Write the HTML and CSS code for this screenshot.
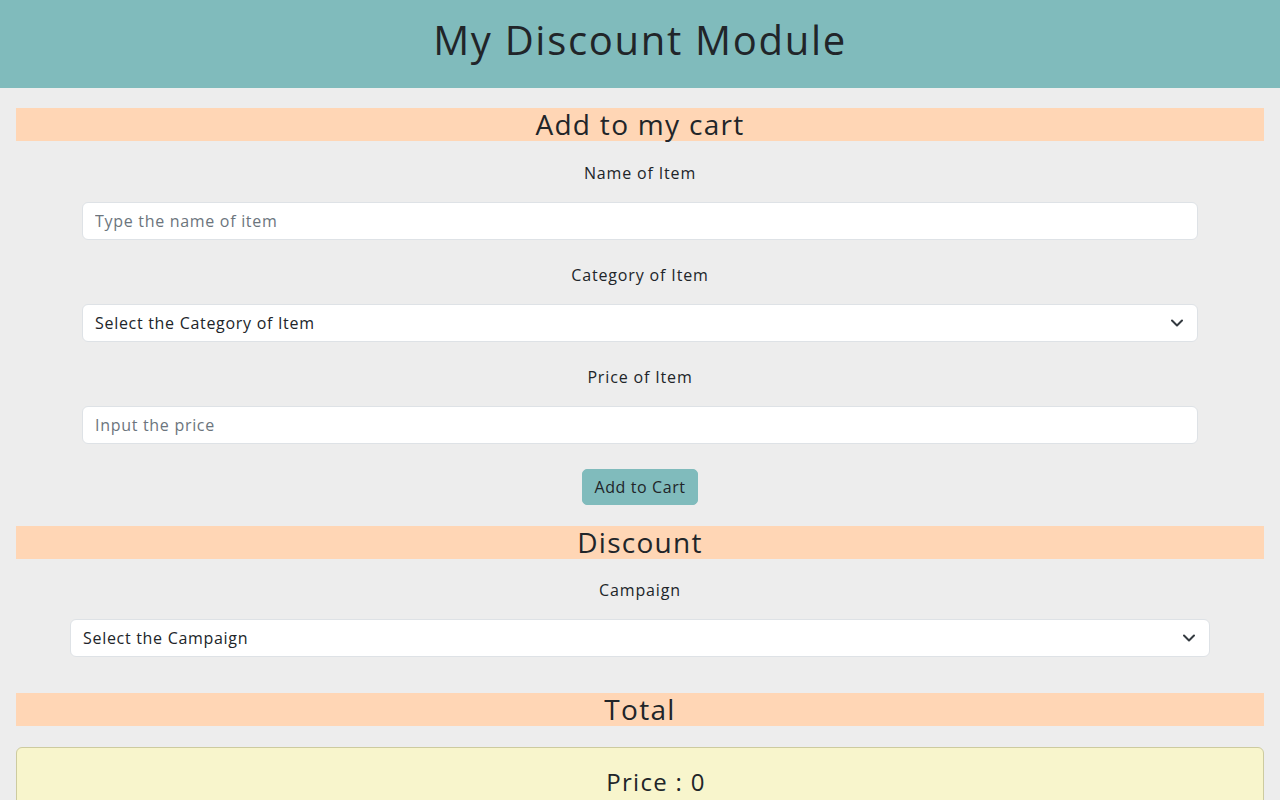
FILE: index.html
```html
<!DOCTYPE html>
<html lang="en">
<head>
<meta charset="utf-8">
<title>My Discount Module</title>
<link rel="stylesheet" href="styles.css">
</head>
<body>
<header class="top">
  <h1 class="title">My Discount Module</h1>
</header>
<main class="page">
  <h3 class="band">Add to my cart</h3>
  <div class="container">
    <form class="form">
      <div class="group">
        <label class="label" for="name">Name of Item</label>
        <input class="control" id="name" type="text" placeholder="Type the name of item">
      </div>
      <div class="group">
        <label class="label" for="cat">Category of Item</label>
        <div class="select-wrap">
          <select class="control select" id="cat">
            <option>Select the Category of Item</option>
          </select>
          <svg class="chev" width="12" height="8" viewBox="0 0 12 8"><path d="M1 1.5l5 5 5-5" fill="none" stroke="#343a40" stroke-width="2" stroke-linecap="round" stroke-linejoin="round"/></svg>
        </div>
      </div>
      <div class="group">
        <label class="label" for="price">Price of Item</label>
        <input class="control" id="price" type="text" placeholder="Input the price">
      </div>
      <div class="actions">
        <button class="btn" type="button">Add to Cart</button>
      </div>
    </form>
  </div>
  <h3 class="band">Discount</h3>
  <div class="container campaign">
    <label class="label" for="camp">Campaign</label>
    <div class="select-wrap">
      <select class="control select" id="camp">
        <option>Select the Campaign</option>
      </select>
      <svg class="chev" width="12" height="8" viewBox="0 0 12 8"><path d="M1 1.5l5 5 5-5" fill="none" stroke="#343a40" stroke-width="2" stroke-linecap="round" stroke-linejoin="round"/></svg>
    </div>
  </div>
  <h3 class="band total-band">Total</h3>
  <div class="card">
    <h4 class="price">Price : 0</h4>
  </div>
</main>
</body>
</html>
```
FILE: styles.css
```css
* { box-sizing: border-box; }
html, body { margin: 0; padding: 0; }
body {
  background: #ededed;
  font-family: "Open Sans", "DejaVu Sans", sans-serif;
  color: #212529;
  font-size: 16px;
  line-height: 1.5;
}
.top {
  background: #80bbbc;
  height: 88px;
  display: flex;
  justify-content: center;
  padding-top: 16px;
}
.title {
  margin: 0;
  font-weight: 400;
  font-size: 40px;
  line-height: 1.2;
  letter-spacing: 1.7px;
}
.page {
  padding: 20px 16px 0;
}
.band {
  margin: 0;
  background: #ffd6b5;
  text-align: center;
  font-weight: 400;
  font-size: 28px;
  line-height: 32px;
  height: 33px;
  letter-spacing: 1.3px;
}
.container {
  max-width: 1140px;
  margin: 0 auto;
}
.form {
  padding: 0 12px;
}
.group {
  display: flex;
  flex-direction: column;
  align-items: stretch;
  padding-top: 20px;
  margin-bottom: 3px;
}
.label {
  display: block;
  text-align: center;
  font-size: 16px;
  line-height: 24px;
  margin-bottom: 17px;
  letter-spacing: 0.85px;
}
.control {
  display: block;
  width: 100%;
  height: 38px;
  padding: 6px 12px;
  font: inherit;
  font-size: 16px;
  color: #212529;
  background: #fff;
  border: 1px solid #dee2e6;
  border-radius: 6px;
  letter-spacing: 0.7px;
}
.control::placeholder { color: #6c757d; opacity: 1; }
.select-wrap { position: relative; }
.select {
  appearance: none;
  -webkit-appearance: none;
  padding-right: 36px;
}
.chev {
  position: absolute;
  right: 15px;
  top: 15px;
  pointer-events: none;
}
.actions {
  display: flex;
  justify-content: center;
  padding-top: 22px;
  padding-bottom: 21px;
}
.btn {
  background: #80bbbc;
  border: 1px solid #80bbbc;
  border-radius: 5px;
  color: #212529;
  font: inherit;
  font-size: 16px;
  line-height: 24px;
  padding: 5px 11px;
  height: 36px;
  letter-spacing: 0.6px;
}
.campaign {
  padding-top: 19px;
  padding-bottom: 36px;
}
.campaign .label { margin-bottom: 17px; }
.card {
  margin-top: 21px;
  background: #f8f5cc;
  border: 1px solid #cdcb9f;
  border-radius: 6px;
  min-height: 80px;
  padding: 20px 0 0 32px;
}
.price {
  margin: 0;
  text-align: center;
  font-weight: 400;
  font-size: 24px;
  line-height: 1.2;
  letter-spacing: 1.3px;
}
```
